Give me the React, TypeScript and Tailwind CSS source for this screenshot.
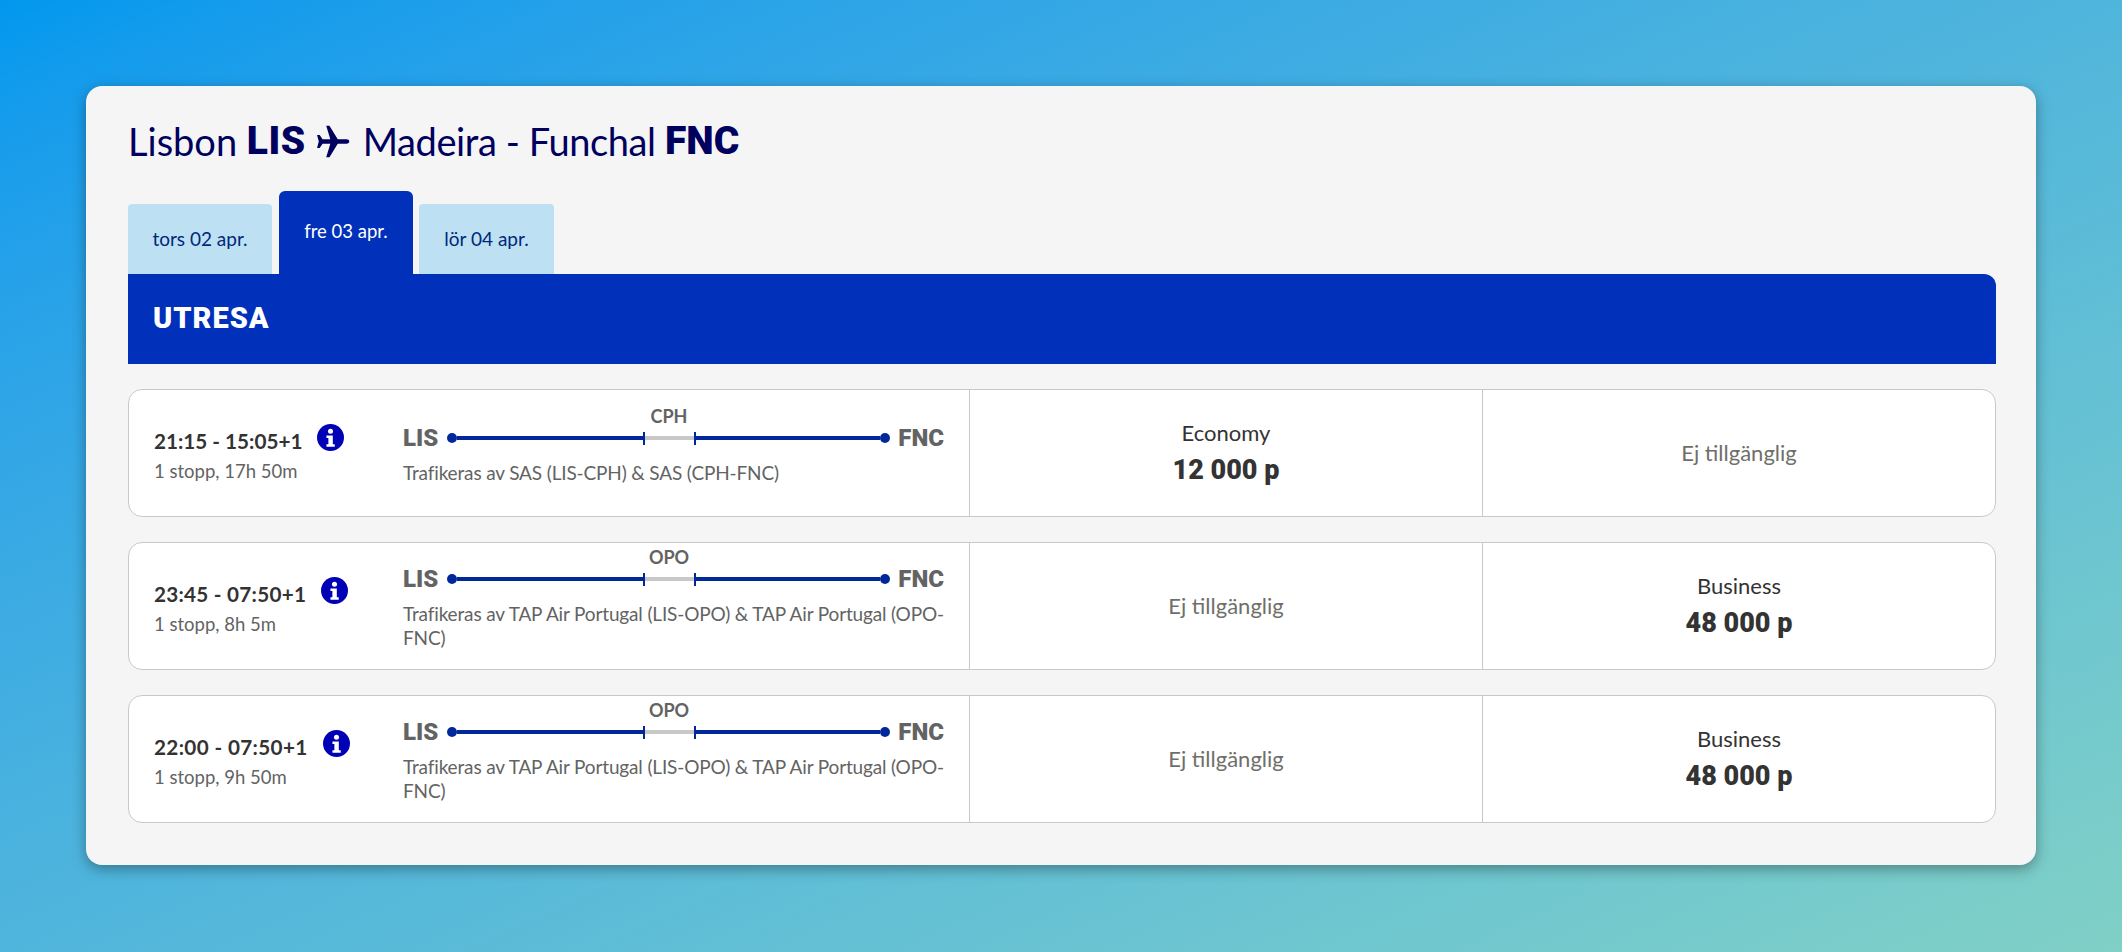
import React from 'react';

type Row = {
  times: string;
  stops: string;
  via: string;
  operated: string;
  economy?: string;
  business?: string;
  timesClass: string;
};

const rows: Row[] = [
  {
    times: '21:15 - 15:05+1',
    stops: '1 stopp, 17h 50m',
    via: 'CPH',
    operated: 'Trafikeras av SAS (LIS-CPH) & SAS (CPH-FNC)',
    economy: '12 000 p',
    timesClass: 'tracking-normal',
  },
  {
    times: '23:45 - 07:50+1',
    stops: '1 stopp, 8h 5m',
    via: 'OPO',
    operated: 'Trafikeras av TAP Air Portugal (LIS-OPO) & TAP Air Portugal (OPO-FNC)',
    business: '48 000 p',
    timesClass: 'tracking-[0.25px]',
  },
  {
    times: '22:00 - 07:50+1',
    stops: '1 stopp, 9h 50m',
    via: 'OPO',
    operated: 'Trafikeras av TAP Air Portugal (LIS-OPO) & TAP Air Portugal (OPO-FNC)',
    business: '48 000 p',
    timesClass: 'tracking-[0.35px]',
  },
];

function PlaneIcon() {
  return (
    <svg viewBox="0 0 24 24" className="w-[35px] h-[35px] ml-[9px] mr-[13px] fill-[#00005f] shrink-0">
      <path d="M23.5 12c0-.9-.8-1.5-1.8-1.5h-6.1L9.9 1.2H7.7l2.8 9.3H5.2L3.2 7.6H1.4l1.2 4.4-1.2 4.4h1.8l2-2.9h5.3l-2.8 9.3h2.2l5.7-9.3h6.1c1 0 1.8-.6 1.8-1.5z" />
    </svg>
  );
}

function InfoIcon() {
  return (
    <svg viewBox="0 0 28 28" className="w-[27px] h-[27px] shrink-0 -mt-[7px]">
      <circle cx="14" cy="14" r="14" fill="#0000b4" />
      <circle cx="14" cy="7.5" r="2.6" fill="#fff" />
      <path d="M9.8 12h6.6v9h2v2.6H9.8V21h2v-6.4h-2z" fill="#fff" />
    </svg>
  );
}

function Route({ via }: { via: string }) {
  return (
    <div className="relative flex items-center h-[24px]">
      <span className="font-['Roboto'] text-[24px] leading-[24px] font-black text-[#636363] w-[36px]">LIS</span>
      <div className="flex items-center flex-1 mx-[8px]">
        <span className="w-[10px] h-[10px] rounded-full bg-[#00289a] shrink-0" />
        <span className="w-[186px] h-[4px] bg-[#00289a]" />
        <span className="w-[2px] h-[13px] bg-[#00289a] shrink-0" />
        <span className="w-[49px] h-[4px] bg-[#c8c8c8]" />
        <span className="w-[2px] h-[13px] bg-[#00289a] shrink-0" />
        <span className="flex-1 h-[4px] bg-[#00289a]" />
        <span className="w-[10px] h-[10px] rounded-full bg-[#00289a] shrink-0" />
      </div>
      <span className="font-['Roboto'] text-[24px] leading-[24px] font-black text-[#636363]">FNC</span>
      <span className="absolute left-[241px] -top-[21px] w-[50px] text-center text-[18px] leading-[22px] font-bold text-[#636363]">
        {via}
      </span>
    </div>
  );
}

function Fare({ cabin, points }: { cabin: string; points?: string }) {
  if (!points) {
    return (
      <div className="w-[513px] shrink-0 border-l border-[#c9c9c9] flex items-center justify-center text-[22px] text-[#6f6f6a] pb-[2px]">
        Ej tillgänglig
      </div>
    );
  }
  return (
    <div className="w-[513px] shrink-0 border-l border-[#c9c9c9] flex flex-col items-center justify-center text-[#333]">
      <span className="text-[22px] leading-[30px]">{cabin}</span>
      <span className="font-['Roboto'] mt-[4px] text-[27px] leading-[36px] font-black">{points}</span>
    </div>
  );
}

export default function App() {
  return (
    <div
      className="w-[2122px] h-[952px] overflow-hidden pt-[86px] pl-[86px] bg-gradient-to-br from-[#0098ee] to-[#80d0c6]"
      style={{ fontFamily: 'Lato, "Open Sans", sans-serif' }}
    >
      <div className="w-[1950px] h-[779px] bg-[#f5f5f5] rounded-[16px] pl-[42px] pr-[40px] pt-[28px] shadow-[0_4px_14px_rgba(0,0,0,0.35)]">
        <h1 className="flex items-center h-[54px] text-[38px] leading-[54px] text-[#00005f] whitespace-pre">
          <span>Lisbon </span>
          <span className="font-['Roboto'] font-black tracking-[0.5px] text-[39px]">LIS</span>
          <PlaneIcon />
          <span className="tracking-[-0.4px]">Madeira - Funchal </span>
          <span className="font-['Roboto'] font-black text-[39px]">FNC</span>
        </h1>

        <div className="flex items-end mt-[23px] h-[83px]">
          <div className="w-[144px] h-[70px] mr-[7px] rounded-t-[4px] bg-[#bde0f3] text-[#00287a] text-[19px] flex items-center justify-center pt-[1px]">
            tors 02 apr.
          </div>
          <div className="w-[134px] h-[83px] mr-[6px] rounded-t-[6px] bg-[#0130bb] text-white text-[18.5px] flex items-center justify-center pb-[2px]">
            fre 03 apr.
          </div>
          <div className="w-[135px] h-[70px] rounded-t-[4px] bg-[#bde0f3] text-[#00287a] text-[19px] flex items-center justify-center pt-[1px]">
            lör 04 apr.
          </div>
        </div>

        <div className="h-[90px] bg-[#0130bb] rounded-tr-[12px] flex items-center px-[25px] text-white">
          <span className="font-['Roboto'] text-[29px] font-black tracking-[1px]">UTRESA</span>
        </div>

        <div className="flex flex-col gap-[25px] mt-[25px]">
          {rows.map((r) => (
            <div key={r.times} className="flex h-[128px] bg-white border border-[#c9c9c9] rounded-[14px] overflow-hidden">
              <div className="w-[840px] shrink-0 flex pl-[25px]">
                <div className="w-[249px] shrink-0 pt-[36px]">
                  <div className="flex items-center gap-[15px]">
                    <span className={`text-[20.7px] leading-[30px] font-bold text-[#333] whitespace-nowrap ${r.timesClass}`}>
                      {r.times}
                    </span>
                    <InfoIcon />
                  </div>
                  <div className="text-[18.5px] leading-[30px] text-[#636363]">{r.stops}</div>
                </div>
                <div className="w-[541px] shrink-0 pt-[5px] flex flex-col justify-center">
                  <Route via={r.via} />
                  <p className="mt-[11px] -mr-[8px] text-[19px] leading-[24px] tracking-[-0.15px] text-[#636363]">{r.operated}</p>
                </div>
              </div>
              <Fare cabin="Economy" points={r.economy} />
              <Fare cabin="Business" points={r.business} />
            </div>
          ))}
        </div>
      </div>
    </div>
  );
}
